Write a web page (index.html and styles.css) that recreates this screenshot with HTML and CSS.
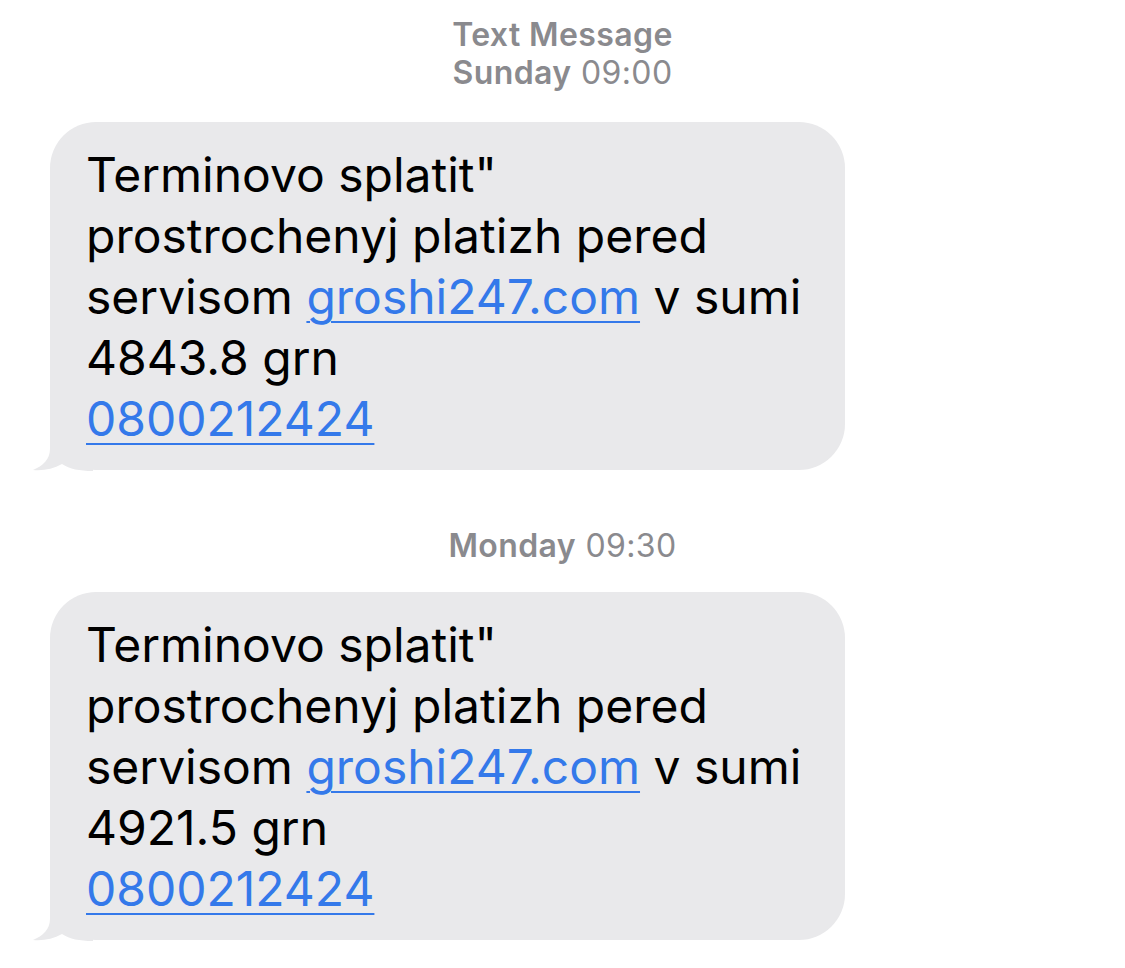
FILE: index.html
```html
<!DOCTYPE html>
<html>
<head>
<meta charset="utf-8">
<link rel="stylesheet" href="styles.css">
</head>
<body>
<div class="thread">
  <div class="stamp">
    <div class="stamp-line"><b>Text Message</b></div>
    <div class="stamp-line"><b>Sunday</b> 09:00</div>
  </div>
  <div class="bubble">
    <svg class="tail" width="60" height="52" viewBox="0 0 60 52"><path d="M17,0 L17,30 C17,40 10,47 0,51 C10,52 20,50 29,45 C37,50 46,52 60,52 L60,0 Z" fill="#e9e9eb"/></svg>
    <p class="msg">Terminovo splatit"<br>prostrochenyj platizh pered<br>servisom <a href="#">groshi247.com</a> v sumi<br>4843.8 grn<br><a href="#">0800212424</a></p>
  </div>
  <div class="stamp stamp-mid">
    <div class="stamp-line"><b>Monday</b> 09:30</div>
  </div>
  <div class="bubble">
    <svg class="tail" width="60" height="52" viewBox="0 0 60 52"><path d="M17,0 L17,30 C17,40 10,47 0,51 C10,52 20,50 29,45 C37,50 46,52 60,52 L60,0 Z" fill="#e9e9eb"/></svg>
    <p class="msg">Terminovo splatit"<br>prostrochenyj platizh pered<br>servisom <a href="#">groshi247.com</a> v sumi<br>4921.5 grn<br><a href="#">0800212424</a></p>
  </div>
</div>
</body>
</html>
```

FILE: styles.css
```css
html, body {
  margin: 0;
  padding: 0;
  background: #ffffff;
}
body {
  font-family: Inter, "Noto Sans", "Liberation Sans", sans-serif;
  width: 1125px;
  height: 968px;
  overflow: hidden;
}
.thread {
  display: flex;
  flex-direction: column;
  padding-top: 16px;
}
.stamp {
  text-align: center;
  color: #8a8a8e;
  font-size: 32px;
  line-height: 38px;
  letter-spacing: 0.4px;
  font-weight: 400;
}
.stamp b {
  font-weight: 600;
}
.stamp-mid {
  margin-top: 57px;
}
.bubble {
  position: relative;
  margin-top: 30px;
  margin-left: 50px;
  width: 795px;
  box-sizing: border-box;
  background: #e9e9eb;
  border-radius: 46px;
  padding: 22px 20px 21px 36px;
}
.stamp-mid + .bubble {
  margin-top: 27px;
}
.tail {
  position: absolute;
  left: -17px;
  bottom: -1px;
  display: block;
}
.msg {
  position: relative;
  margin: 0;
  font-size: 48px;
  line-height: 61px;
  color: #000000;
  font-weight: 400;
}
.msg a {
  color: #3479ea;
  text-decoration: underline;
  text-decoration-thickness: 2px;
  text-underline-offset: 7px;
}
```
